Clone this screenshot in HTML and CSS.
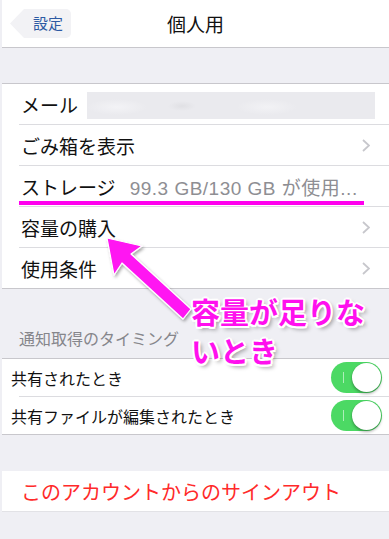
FILE: index.html
```html
<!DOCTYPE html>
<html lang="ja">
<head>
<meta charset="utf-8">
<title>個人用</title>
<link rel="stylesheet" href="styles.css">
</head>
<body>
<div class="page">
  <header class="nav">
    <div class="back">設定</div>
    <div class="title">個人用</div>
    <div></div>
  </header>
  <div class="spacer"></div>
  <section class="group g1">
    <div class="row"><span>メール</span><span class="blur"></span></div>
    <div class="row"><span class="label">ごみ箱を表示</span><svg class="chev" width="8" height="13" viewBox="0 0 8 13"><polyline points="1,1 7,6.5 1,12"/></svg></div>
    <div class="row"><span class="key">ストレージ</span><span class="value">99.3 GB/130 GB が使用...</span><span class="mark"></span></div>
    <div class="row"><span class="label">容量の購入</span><svg class="chev" width="8" height="13" viewBox="0 0 8 13"><polyline points="1,1 7,6.5 1,12"/></svg></div>
    <div class="row"><span class="label">使用条件</span><svg class="chev" width="8" height="13" viewBox="0 0 8 13"><polyline points="1,1 7,6.5 1,12"/></svg></div>
  </section>
  <div class="section-head"><span>通知取得のタイミング</span></div>
  <section class="group g2">
    <div class="row"><span class="label">共有されたとき</span><span class="switch"></span></div>
    <div class="row"><span class="label">共有ファイルが編集されたとき</span><span class="switch"></span></div>
  </section>
  <div class="gap"></div>
  <section class="signout">このアカウントからのサインアウト</section>

  <svg class="arrow" width="389" height="539" viewBox="0 0 389 539">
    <defs>
      <filter id="sh" x="-20%" y="-20%" width="140%" height="140%">
        <feDropShadow dx="1.5" dy="2" stdDeviation="1.5" flood-color="#000" flood-opacity="0.35"/>
      </filter>
    </defs>
    <polygon points="107,238 142,246 131,254 191,309 183,319 122,263 114,275" fill="#ff14f2" stroke="#ffffff" stroke-width="1.2" stroke-linejoin="round" filter="url(#sh)"/>
  </svg>
  <div class="note">容量が足りな<br>いとき</div>
</div>
</body>
</html>
```
FILE: styles.css
```css
html, body {
  margin: 0;
  padding: 0;
}
body {
  background: #efeff4;
  font-family: "Liberation Sans", "Noto Sans CJK JP", sans-serif;
  width: 389px;
  height: 539px;
  overflow: hidden;
}
.page {
  position: relative;
  padding-left: 2px;
  height: 539px;
}
.nav {
  height: 47px;
  background: #fff;
  border-bottom: 1px solid #c8c7cc;
  display: grid;
  grid-template-columns: 1fr auto 1fr;
  align-items: center;
}
.back {
  justify-self: start;
  margin-left: 8px;
  width: 61px;
  height: 29px;
  box-sizing: border-box;
  padding-left: 23px;
  background: #f2f2f5;
  border-radius: 0 5px 5px 0;
  clip-path: polygon(0 50%, 14px 0, 100% 0, 100% 100%, 14px 100%);
  font-size: 15px;
  line-height: 29px;
  color: #2d5aa3;
}
.title {
  font-size: 19px;
  color: #111;
}
.spacer {
  height: 35px;
}
.group {
  background: #fff;
  border-top: 1px solid #c8c7cc;
  border-bottom: 1px solid #c8c7cc;
}
.row {
  position: relative;
  display: flex;
  align-items: center;
  box-sizing: border-box;
}
.row + .row::before {
  content: "";
  position: absolute;
  left: 17px;
  right: 0;
  top: 0;
  height: 1px;
  background: #dcdce0;
}
.g1 .row {
  height: 40px;
  padding: 0 19px 0 19px;
  font-size: 19px;
  color: #111;
}
.g1 .row + .row {
  height: 41px;
  padding-top: 1px;
}
.label {
  flex: 1;
  white-space: nowrap;
}
.key {
  flex: none;
  white-space: nowrap;
}
.blur {
  flex: 1;
  height: 27px;
  margin-left: 9px;
  margin-right: -5px;
  margin-top: 2px;
  background:
    radial-gradient(ellipse 14px 5px at 95px 14px, #e0e0e4 0%, rgba(224,224,228,0) 100%),
    radial-gradient(ellipse 30px 8px at 180px 15px, #f2f2f5 0%, rgba(242,242,245,0) 100%),
    radial-gradient(ellipse 30px 8px at 30px 15px, #f3f3f6 0%, rgba(243,243,246,0) 100%),
    #eaeaee;
}
.value {
  color: #8e8e93;
  white-space: nowrap;
  overflow: hidden;
  flex: none;
  margin-left: 14px;
  letter-spacing: 0.5px;
}
.mark {
  position: absolute;
  left: 17px;
  right: 25px;
  bottom: 1px;
  height: 4px;
  background: #ff00ee;
}
.chev {
  flex: none;
}
.chev polyline {
  fill: none;
  stroke: #c7c7cc;
  stroke-width: 1.8;
}
.section-head {
  height: 69px;
  box-sizing: border-box;
  display: flex;
  align-items: flex-end;
  padding: 0 0 8px 17px;
  font-size: 16px;
  line-height: 20px;
  color: #86868b;
}
.g2 .row {
  height: 37px;
  padding: 0 7px 0 9px;
  font-size: 16px;
  color: #111;
}
.g2 .row + .row {
  height: 38px;
  padding-top: 1px;
}
.switch {
  position: relative;
  flex: none;
  width: 51px;
  height: 31px;
  border-radius: 16px;
  background: #4cd964;
}
.switch::before {
  content: "";
  position: absolute;
  left: 12px;
  top: 10px;
  width: 1px;
  height: 11px;
  background: rgba(255, 255, 255, 0.55);
}
.switch::after {
  content: "";
  position: absolute;
  right: 1px;
  top: 1px;
  width: 29px;
  height: 29px;
  border-radius: 50%;
  background: #fff;
  box-shadow: 0 2px 3px rgba(0, 0, 0, 0.3), 0 0 0 0.5px rgba(0, 0, 0, 0.08);
}
.gap {
  height: 36px;
}
.signout {
  height: 40px;
  background: #fff;
  border-bottom: 1px solid #e2e2e6;
  display: flex;
  align-items: center;
  padding-left: 19px;
  font-size: 20px;
  color: #ff2a2a;
}
.arrow {
  position: absolute;
  left: 0;
  top: 0;
  pointer-events: none;
}
.note {
  position: absolute;
  left: 191px;
  top: 292px;
  font-family: "Noto Sans CJK JP", sans-serif;
  font-weight: 700;
  font-size: 29px;
  line-height: 39px;
  color: #ff10ee;
  text-shadow:
    2px 0 0 #fff, -2px 0 0 #fff, 0 2px 0 #fff, 0 -2px 0 #fff,
    1.5px 1.5px 0 #fff, -1.5px 1.5px 0 #fff, 1.5px -1.5px 0 #fff, -1.5px -1.5px 0 #fff,
    3px 3px 4px rgba(0, 0, 0, 0.4);
}
```
